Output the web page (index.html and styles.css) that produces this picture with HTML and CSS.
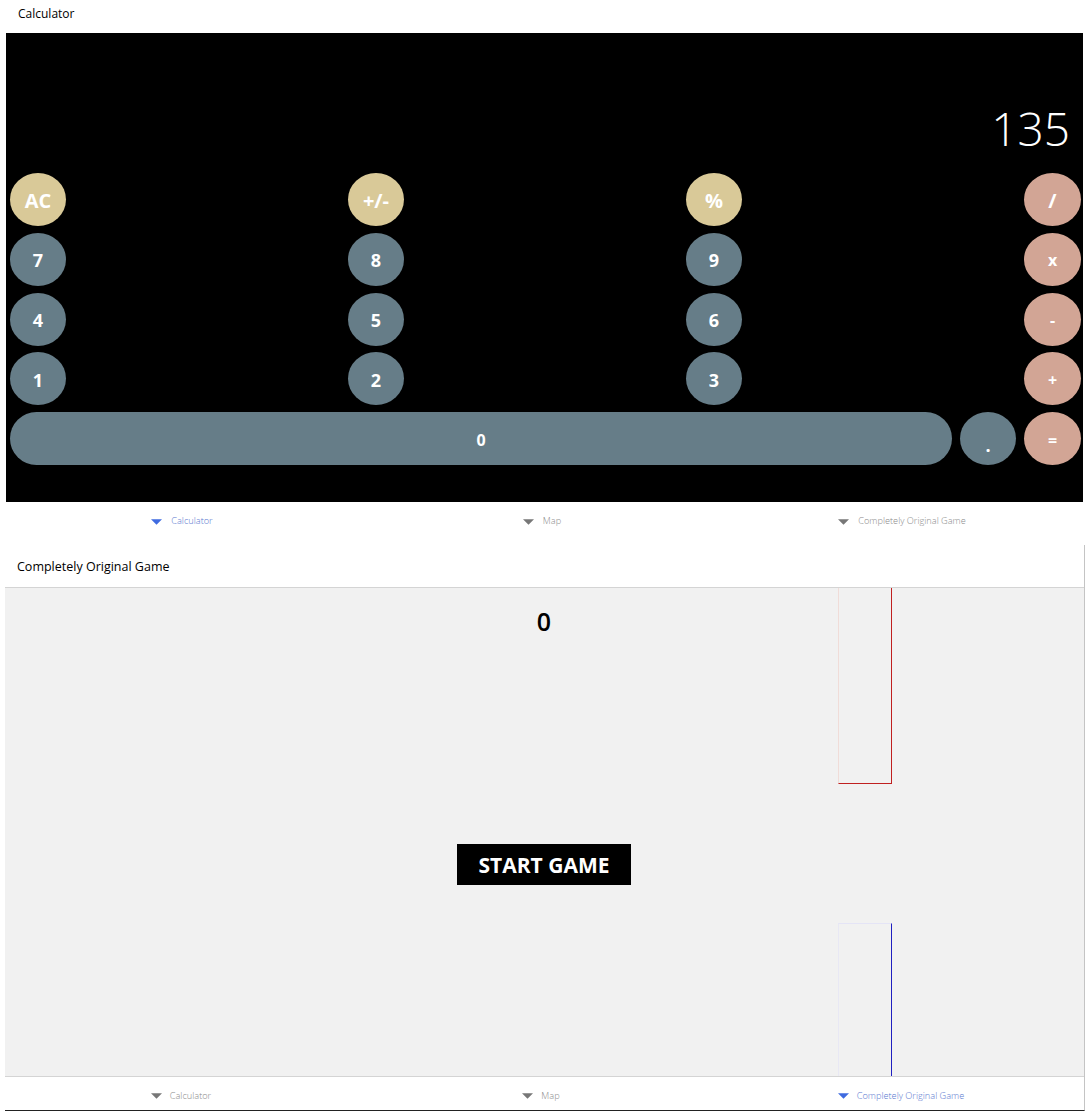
FILE: index.html
```html
<!DOCTYPE html>
<html lang="en">
<head>
  <meta charset="UTF-8">
  <title>Calculator and Game</title>
  <link rel="stylesheet" href="styles.css">
</head>
<body>

  <section class="app app-calc">
    <div class="app-title calc-title">Calculator</div>
    <div class="calc">
      <div class="calc-display">135</div>
      <div class="calc-row">
        <button class="key key-top">AC</button>
        <button class="key key-top">+/-</button>
        <button class="key key-top">%</button>
        <button class="key key-op key-slash">/</button>
      </div>
      <div class="calc-row">
        <button class="key">7</button>
        <button class="key">8</button>
        <button class="key">9</button>
        <button class="key key-op">x</button>
      </div>
      <div class="calc-row">
        <button class="key">4</button>
        <button class="key">5</button>
        <button class="key">6</button>
        <button class="key key-op">-</button>
      </div>
      <div class="calc-row">
        <button class="key">1</button>
        <button class="key">2</button>
        <button class="key">3</button>
        <button class="key key-op">+</button>
      </div>
      <div class="calc-row calc-row-last">
        <button class="key key-wide">0</button>
        <button class="key key-dot">.</button>
        <button class="key key-op">=</button>
      </div>
    </div>
    <nav class="tabs">
      <a class="tab tab-active"><svg class="tab-arrow" viewBox="0 0 12 6"><path d="M0 0H12L6 6Z"/></svg>Calculator</a>
      <a class="tab"><svg class="tab-arrow" viewBox="0 0 12 6"><path d="M0 0H12L6 6Z"/></svg>Map</a>
      <a class="tab"><svg class="tab-arrow" viewBox="0 0 12 6"><path d="M0 0H12L6 6Z"/></svg>Completely Original Game</a>
    </nav>
  </section>

  <section class="app app-game">
    <div class="app-title game-title">Completely Original Game</div>
    <div class="game">
      <div class="game-score">0</div>
      <div class="pipe pipe-top"></div>
      <button class="start-button">START GAME</button>
      <div class="pipe pipe-bottom"></div>
    </div>
    <nav class="tabs tabs-game">
      <a class="tab"><svg class="tab-arrow" viewBox="0 0 12 6"><path d="M0 0H12L6 6Z"/></svg>Calculator</a>
      <a class="tab"><svg class="tab-arrow" viewBox="0 0 12 6"><path d="M0 0H12L6 6Z"/></svg>Map</a>
      <a class="tab tab-active"><svg class="tab-arrow" viewBox="0 0 12 6"><path d="M0 0H12L6 6Z"/></svg>Completely Original Game</a>
    </nav>
  </section>

</body>
</html>
```

FILE: styles.css
```css
body {
  margin: 0;
  background-color: #fff;
  font-family: "Open Sans", "Noto Sans", sans-serif;
  color: #000;
}

button {
  font-family: inherit;
  border: none;
  padding: 0;
}

.app-calc {
  height: 545px;
  padding-left: 6px;
  width: 1077px;
}

.app-title {
  display: flex;
  align-items: center;
}

.calc-title {
  height: 27px;
  padding-left: 12px;
  margin-bottom: 6px;
  font-size: 12px;
}

.calc {
  height: 469px;
  box-sizing: border-box;
  background-color: #000;
  padding: 72px 2px 0 4px;
  display: flex;
  flex-direction: column;
}

.calc-display {
  height: 68px;
  padding-right: 11px;
  text-align: right;
  font-size: 46px;
  font-weight: 300;
  line-height: 46px;
  color: #fff;
}

.calc-row {
  display: flex;
  justify-content: space-between;
  height: 59.75px;
}

.calc-row-last {
  gap: 8px;
}

.key {
  width: 56px;
  height: 53px;
  padding-top: 2px;
  border-radius: 50%;
  background-color: #667d88;
  color: #fff;
  font-size: 18px;
  font-weight: 700;
}

.key-top {
  background-color: #d9c998;
  font-size: 20px;
}

.key-op {
  width: 57px;
  background-color: #d2a595;
  font-size: 16px;
}

.key-slash {
  font-size: 20px;
}

.key-wide {
  flex: 1;
  border-radius: 27px;
  font-size: 16px;
}

.key-dot {
  padding-top: 12px;
}

.tabs {
  display: flex;
  height: 43px;
  padding-left: 2px;
  width: 1080px;
  margin-left: -6px;
}

.tab {
  width: 360px;
  display: flex;
  justify-content: center;
  align-items: center;
  gap: 9px;
  padding-bottom: 6px;
  box-sizing: border-box;
  font-size: 9.2px;
  font-weight: 300;
  color: #8a8a8a;
}

.tab-arrow {
  width: 11px;
  height: 6px;
  fill: #777;
  margin-top: 2px;
}

.tab-active {
  color: #5a78d0;
}

.tab-active .tab-arrow {
  fill: #3f6be0;
}

.app-game {
  margin-left: 5px;
  width: 1079px;
  border-right: 1px solid #c4c4c4;
  border-bottom: 1px solid #222;
}

.game-title {
  height: 43px;
  box-sizing: border-box;
  padding-left: 12px;
  font-size: 12.5px;
  border-bottom: 1px solid #d4d4d4;
}

.game {
  position: relative;
  height: 489px;
  box-sizing: border-box;
  background-color: #f1f1f1;
  border-bottom: 1px solid #d4d4d4;
  display: flex;
  flex-direction: column;
  align-items: center;
}

.game-score {
  font-size: 25px;
  font-weight: 600;
  line-height: 34px;
  margin-top: 16px;
  margin-right: 1px;
}

.start-button {
  margin-top: 206px;
  margin-right: 1px;
  width: 174px;
  height: 41px;
  background-color: #000;
  color: #fff;
  font-size: 21px;
  font-weight: 700;
}

.pipe {
  position: absolute;
  left: 833px;
  width: 54px;
  box-sizing: border-box;
}

.pipe-top {
  top: 0;
  height: 196px;
  border-right: 1px solid #c02020;
  border-bottom: 1px solid #c02020;
  border-left: 1px solid #f0dcd8;
}

.pipe-bottom {
  top: 335px;
  height: 153px;
  border-right: 1px solid #2020c0;
  border-top: 1px solid #e4e4f6;
  border-left: 1px solid #e8e8f4;
}

.tabs-game {
  height: 33px;
  margin-left: -4px;
  width: 1080px;
  padding-left: 0;
}

.tabs-game .tab {
  padding: 3px 0 0;
  gap: 8px;
}
```
